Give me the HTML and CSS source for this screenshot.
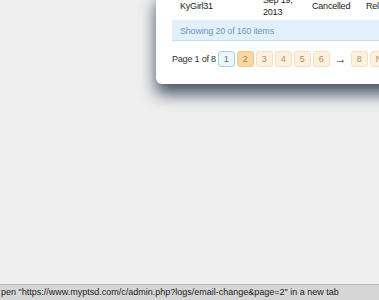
FILE: index.html
```html
<!DOCTYPE html>
<html lang="en">
<head>
    <meta charset="UTF-8">
    <title>Email change log</title>
    <link rel="stylesheet" href="styles.css">
</head>
<body>
    <div class="page">
        <div class="panel">
            <div class="row">
                <div class="cell c-user">KyGirl31</div>
                <div class="cell c-date">Sep 19, 2013</div>
                <div class="cell c-state">Cancelled</div>
                <div class="cell c-more">Related</div>
            </div>
            <div class="footer">Showing 20 of 160 items</div>
            <div class="pagenav">
                <span class="pagelabel">Page 1 of 8</span>
                <a class="pg current" href="#">1</a>
                <a class="pg hover" href="#">2</a>
                <a class="pg" href="#">3</a>
                <a class="pg" href="#">4</a>
                <a class="pg" href="#">5</a>
                <a class="pg" href="#">6</a>
                <span class="skip">&rarr;</span>
                <a class="pg" href="#">8</a>
                <a class="pg next" href="#">Next</a>
            </div>
        </div>
    </div>
    <div class="statusbar">pen "https://www.myptsd.com/c/admin.php?logs/email-change&amp;page=2" in a new tab</div>
</body>
</html>
```

FILE: styles.css
```css
html, body {
    height: 100%;
}
body {
    margin: 0;
    background-color: #efefef;
    font-family: "Liberation Sans", Arial, sans-serif;
    font-size: 9px;
    letter-spacing: -0.2px;
    color: #222;
    display: flex;
    flex-direction: column;
    overflow: hidden;
}
.page {
    flex: 1;
}
.panel {
    margin: -8px -60px 0 156px;
    background: #fff;
    border-radius: 0 0 0 6px;
    padding: 0 16px 17px 16px;
    box-shadow: 0 10px 16px rgba(40, 55, 75, 0.85);
}
.row {
    display: grid;
    grid-template-columns: 91px 49px 54px auto;
    padding: 2px 0;
    align-items: center;
}
.cell {
    line-height: 12px;
    white-space: nowrap;
}
.c-user {
    padding-left: 8px;
}
.c-date {
    white-space: normal;
    padding-right: 4px;
}
.footer {
    background: #e2f0fb;
    border-bottom: 1px solid #c7dcee;
    color: #6a9ac6;
    padding: 0 8px;
    height: 20px;
    line-height: 22px;
}
.pagenav {
    display: flex;
    align-items: center;
    gap: 2px;
    margin-top: 10px;
    white-space: nowrap;
}
.pagelabel {
    color: #333;
}
.pg {
    display: inline-block;
    box-sizing: border-box;
    width: 17px;
    height: 16px;
    line-height: 14px;
    text-align: center;
    text-decoration: none;
    letter-spacing: 0;
    border: 1px solid #f4dfc2;
    border-radius: 3px;
    background: #fcf0df;
    color: #bb8c5c;
}
.pg.next {
    width: auto;
    padding: 0 5px;
}
.pg.current {
    background: #eef6fc;
    border-color: #a9cde9;
    color: #4d7195;
}
.pg.hover {
    background: #f8d6a6;
    border-color: #f1c68d;
    color: #b07d46;
}
.skip {
    width: 17px;
    text-align: center;
    color: #333;
    font-size: 12px;
    line-height: 14px;
}
.statusbar {
    height: 15px;
    line-height: 15px;
    background: #d6d6d6;
    border-top: 1px solid #b9b9b9;
    font-size: 9px;
    letter-spacing: 0;
    color: #222;
    padding-left: 1px;
    white-space: nowrap;
}
```
